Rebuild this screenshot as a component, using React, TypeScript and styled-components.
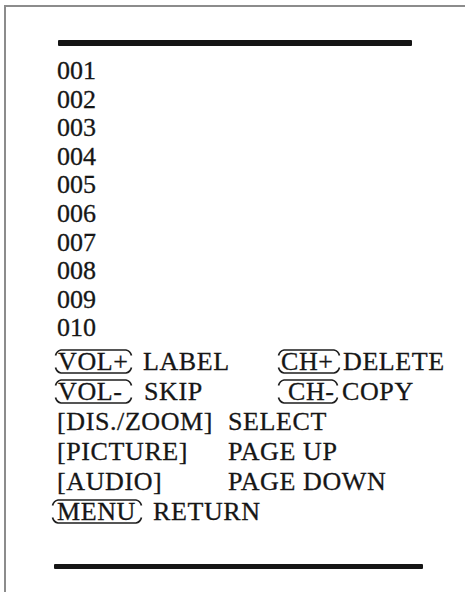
import React from 'react';
import styled, { createGlobalStyle } from 'styled-components';

const GlobalStyle = createGlobalStyle`
  html, body {
    margin: 0;
    padding: 0;
    background: #ffffff;
    overflow: hidden;
  }
`;

const Frame = styled.div`
  margin: 5px 0 0 4px;
  width: calc(100vw - 4px);
  height: calc(100vh - 5px);
  box-sizing: border-box;
  border-top: 2px solid #8c8c8c;
  border-left: 2px solid #8c8c8c;
  display: flex;
  flex-direction: column;
  align-items: flex-start;
  overflow: hidden;
  font-family: "Liberation Serif", "Times New Roman", serif;
  color: #161616;
  -webkit-text-stroke: 0.3px #161616;
`;

const Rule = styled.div<{ $top: number; $left: number; $width: number; $thick: number }>`
  flex: none;
  margin-top: ${p => p.$top}px;
  margin-left: ${p => p.$left}px;
  width: ${p => p.$width}px;
  height: ${p => p.$thick}px;
  background: #151515;
  border-radius: 1px;
`;

const NumberList = styled.ol`
  list-style: none;
  margin: 11px 0 0;
  padding: 0 0 0 51px;
  font-size: 26px;
  line-height: 28.6px;
`;

const KeyTable = styled.div`
  margin-top: 4.5px;
  padding-left: 49px;
  display: flex;
  flex-direction: column;
  font-size: 26px;
  line-height: 30px;
  letter-spacing: 0.6px;
`;

const Row = styled.div<{ $cols: string }>`
  display: grid;
  grid-template-columns: ${p => p.$cols};
  height: 30px;
  align-items: start;
  white-space: nowrap;
`;

const Cell = styled.span<{ $pad?: number }>`
  padding-left: ${p => p.$pad ?? 0}px;
`;

const KeyCap = styled.span<{ $width: number; $pad: number; $shift?: number }>`
  position: relative;
  display: inline-block;
  width: ${p => p.$width}px;
  padding-left: ${p => p.$pad}px;
  margin-left: ${p => p.$shift ?? 0}px;
  box-sizing: border-box;
  height: 30px;

  svg {
    position: absolute;
    left: 0;
    top: 1px;
    overflow: visible;
  }
`;

// key outline: top and bottom edges only, ends curled like a brace
const Key: React.FC<{ label: string; width: number; pad: number; shift?: number }> = ({ label, width, pad, shift }) => {
  const w = width;
  const h = 27;
  const top = `M0.5 7.5 C1.5 4 3 2.5 6 2 H${w - 6} C${w - 3} 2.5 ${w - 1.5} 4 ${w - 0.5} 7.5`;
  const bottom = `M0.5 ${h - 7.5} C1.5 ${h - 4} 3 ${h - 2.5} 6 ${h - 2} H${w - 6} C${w - 3} ${h - 2.5} ${w - 1.5} ${h - 4} ${w - 0.5} ${h - 7.5}`;
  return (
    <KeyCap $width={width} $pad={pad} $shift={shift}>
      {label}
      <svg width={w} height={h} viewBox={`0 0 ${w} ${h}`}>
        <path d={top} fill="none" stroke="#1e1e1e" strokeWidth="1.7" />
        <path d={bottom} fill="none" stroke="#1e1e1e" strokeWidth="1.7" />
      </svg>
    </KeyCap>
  );
};

const channels = ['001', '002', '003', '004', '005', '006', '007', '008', '009', '010'];

export default function App() {
  return (
    <>
      <GlobalStyle />
      <Frame>
        <Rule $top={33} $left={52} $width={354} $thick={6} />
        <NumberList>
          {channels.map(c => (
            <li key={c}>{c}</li>
          ))}
        </NumberList>
        <KeyTable>
          <Row $cols="88px 135px 65px 1fr">
            <Key label="VOL+" width={77} pad={3} />
            <Cell>LABEL</Cell>
            <Key label="CH+" width={62} pad={3} />
            <Cell>DELETE</Cell>
          </Row>
          <Row $cols="88px 135px 64px 1fr">
            <Key label="VOL-" width={77} pad={3} />
            <Cell $pad={1}>SKIP</Cell>
            <Key label="CH-" width={60} pad={10} />
            <Cell>COPY</Cell>
          </Row>
          <Row $cols="173px 1fr">
            <Cell $pad={2}>[DIS./ZOOM]</Cell>
            <Cell>SELECT</Cell>
          </Row>
          <Row $cols="173px 1fr">
            <Cell $pad={2}>[PICTURE]</Cell>
            <Cell>PAGE UP</Cell>
          </Row>
          <Row $cols="173px 1fr">
            <Cell $pad={2}>[AUDIO]</Cell>
            <Cell>PAGE DOWN</Cell>
          </Row>
          <Row $cols="98px 1fr">
            <Key label="MENU" width={90} pad={5} shift={-3} />
            <Cell>RETURN</Cell>
          </Row>
        </KeyTable>
        <Rule $top={36.5} $left={48} $width={369} $thick={5} />
      </Frame>
    </>
  );
}
